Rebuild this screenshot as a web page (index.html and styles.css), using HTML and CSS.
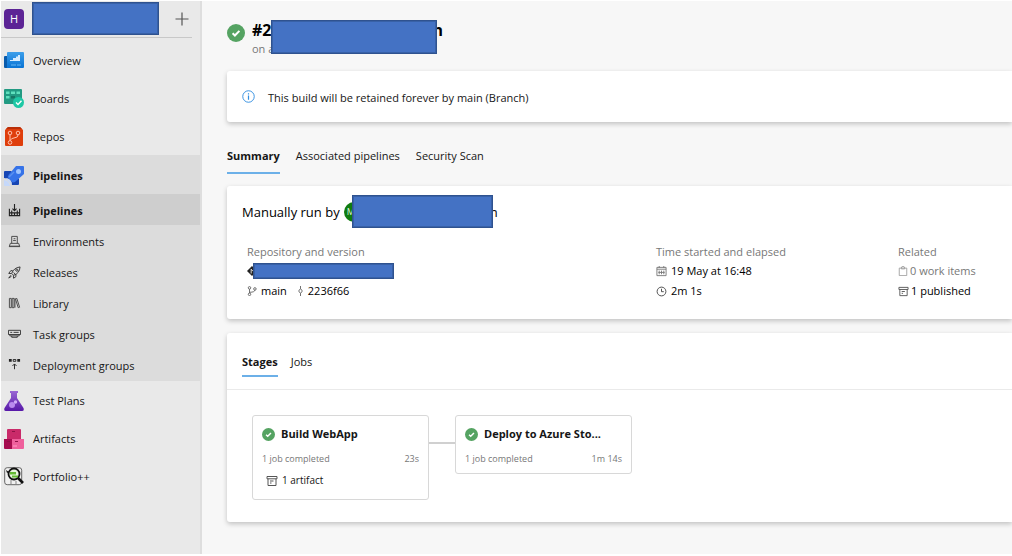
FILE: index.html
```html
<!DOCTYPE html>
<html lang="en">
<head>
<meta charset="utf-8">
<meta name="viewport" content="width=device-width, initial-scale=1">
<title>Pipeline run</title>
<link rel="stylesheet" href="styles.css">
</head>
<body>
<svg class="defs" aria-hidden="true">
  <symbol id="check" viewBox="0 0 18 18"><circle cx="9" cy="9" r="9" fill="#55a362"/><path d="M5.600 9.300l2.300 2.200 4.500-4.600" fill="none" stroke="#fff" stroke-width="2"/></symbol>
  <symbol id="artifact" viewBox="0 0 12 12"><path d="M1 1.500h10v2.300H1zM2 3.800v6.700h8V3.800M4 6h3.500M4 8h1.500" fill="none" stroke="currentColor"/></symbol>
</svg>
<div class="app">
  <aside class="sidebar">
    <div class="project">
      <span class="avatar">H</span>
      <span class="mask mask-project"></span>
      <button class="add" aria-label="Add"><svg viewBox="0 0 14 14" width="14" height="14"><path d="M7 .5v13M.5 7h13" stroke="#555" stroke-width="1.200"/></svg></button>
    </div>
    <nav class="nav">
      <a class="item" href="#"><svg class="icon" viewBox="0 0 20 20"><defs><linearGradient id="ov" x2="0" y2="1"><stop stop-color="#3c9eea"/><stop offset="1" stop-color="#0873d4"/></linearGradient></defs><path d="M0 6q0-1 1-1h4v12H1q-1 0-1-1z" fill="#0a5bab"/><path d="M3 2q0-1 1-1h15q1 0 1 1v14q0 1-1 1H3z" fill="url(#ov)"/><path d="M6 9h3V7h3V5.500h2V4h2v6H6z" fill="#d6ecff"/><path d="M7 14h5M13 14h4" stroke="#64b5f3" stroke-width="1.200"/></svg><span>Overview</span></a>
      <a class="item" href="#"><svg class="icon" viewBox="0 0 20 20"><path d="M0 1q0-1 1-1h16q1 0 1 1v14H1q-1 0-1-1z" fill="#229a82"/><path d="M2 2.500h3.500v2.500H2zM7 2.500h4v2.500H7zM12.500 2.500H16v2.500h-3.500zM2 7h3.500v2.500H2z" fill="#5fe0bd"/><path d="M7 7h4v2.500H7z" fill="#167563"/><circle cx="14.500" cy="13.500" r="5.500" fill="#1ec8a5"/><path d="M12 13.500l2 2 3.500-3.700" fill="none" stroke="#fff" stroke-width="1.400"/></svg><span>Boards</span></a>
      <a class="item" href="#"><svg class="icon" viewBox="0 0 20 20"><path d="M4 0h12l3 3v15q0 1-1 1H2q-1 0-1-1V3z" fill="#df3e0c"/><path d="M4 0h12l2 2H2z" fill="#b92f08"/><g fill="none" stroke="#ffc3ae"><circle cx="6" cy="6" r="1.800"/><circle cx="14" cy="6" r="1.800"/><circle cx="6" cy="15.500" r="1.800"/><path d="M6 8v5.700M14 8q0 2.500-3 2.700-4 .3-5 3"/></g></svg><span>Repos</span></a>
      <div class="group">
        <a class="item active" href="#"><svg class="icon" viewBox="0 0 20 20"><path d="M1 5h6l8 8v5q0 1-1 1H8l-1-5-1-1-6-1V6q0-1 1-1z" fill="#1746b4"/><path d="M12 0h7q1 0 1 1v7l-9 8q-2 1-3.500-.5l-3-3Q3 11 4.500 9z" fill="#3673e8"/><path d="M5 11l5-5" stroke="#5b91f0" stroke-width="1.500"/><circle cx="14.500" cy="5.500" r="2.500" fill="#9dc3ff"/><path d="M0 14l3 1 2 2 1 3H1q-1 0-1-1zM3 12l5 5-1 1-5-5z" fill="#c5d8fa"/></svg><span>Pipelines</span></a>
        <a class="item sub current" href="#"><svg class="subicon" viewBox="0 0 14 14"><path d="M7 0v7M4.800 5L7 7.200 9.200 5M1.500 5v7.500h11V5M4 7v5M7 9v3.500M10 7v5M1.500 9.500h11" fill="none" stroke="#222" stroke-width="1.200"/></svg><span>Pipelines</span></a>
        <a class="item sub" href="#"><svg class="subicon" viewBox="0 0 14 14"><path d="M4 9V1.500h6V9M6 4h2M5.500 6h3M2.500 9h9l1 3h-11zM1 12.500h12" fill="none" stroke="#444"/></svg><span>Environments</span></a>
        <a class="item sub" href="#"><svg class="subicon" viewBox="0 0 14 14"><path d="M4 8Q6 2 13 1q-.5 7-7 9zM5 5H3L.8 8l3 .2M8.500 9v2.500L6 13.200 5.800 10M3 10l-2.200 3 3-2M6 7l2 2" fill="none" stroke="#333"/><circle cx="9.500" cy="4.500" r="1.200" fill="none" stroke="#333"/></svg><span>Releases</span></a>
        <a class="item sub" href="#"><svg class="subicon" viewBox="0 0 14 14"><path d="M1.500 1.500h2v10h-2zM4.500 1.500h2v10h-2zM8 2l1.500-.5 3 9.500-1.500.5zM7.500 1.500v10" fill="none" stroke="#444"/></svg><span>Library</span></a>
        <a class="item sub" href="#"><svg class="subicon" viewBox="0 0 14 14"><path d="M.5 2.500h13v4.500H.5zM2.500 4.700h2M6 4.700h5.500M2 7v1.500h10V7M4 8.500V10h6V8.500" fill="none" stroke="#333"/></svg><span>Task groups</span></a>
        <a class="item sub" href="#"><svg class="subicon" viewBox="0 0 14 14"><path d="M1 0h3v3H1zM10 0h3v3h-3z" fill="#222"/><path d="M5.600 .5h2.800v2H5.600zM7 11V5.500M4.800 7.500L7 5.300l2.200 2.200" fill="none" stroke="#222"/></svg><span>Deployment groups</span></a>
      </div>
      <a class="item" href="#"><svg class="icon" viewBox="0 0 20 20"><defs><linearGradient id="tp" x2="0" y2="1"><stop stop-color="#9a68d4"/><stop offset="1" stop-color="#5718a8"/></linearGradient></defs><path d="M6 0h8v2h-1v5l6.500 10q1 3-1.500 3H2q-2.500 0-1.500-3L7 7V2H6z" fill="url(#tp)"/><circle cx="8" cy="14" r="3" fill="#b98aee"/><circle cx="11.500" cy="11" r="1.700" fill="#d0aef8"/></svg><span>Test Plans</span></a>
      <a class="item" href="#"><svg class="icon" viewBox="0 0 20 20"><path d="M4 0h12q1 0 1 1v9H3V1q0-1 1-1z" fill="#c92a69"/><path d="M0 10h8v10H1q-1 0-1-1z" fill="#a60d4f"/><path d="M8 10h12v9q0 1-1 1H8z" fill="#ef609c"/><path d="M8 2.500h3M3 12.500h3M11 12.500h3" stroke="#8d1246" stroke-width="1.200"/><path d="M9 17h4" stroke="#ff9dc4"/></svg><span>Artifacts</span></a>
      <a class="item" href="#"><svg class="icon" viewBox="0 0 20 20"><rect x=".7" y=".7" width="17" height="17" rx="2.500" fill="#f1f1f1" stroke="#666"/><path d="M7 13v4M12 14v3" stroke="#bbb" stroke-width="2"/><circle cx="10" cy="7" r="5.500" fill="#e8f6df" stroke="#111" stroke-width="1.800"/><path d="M6 5h6v2.500H6zM8 8.500h6v2H8z" fill="#63b933"/><path d="M14 11l5 5" stroke="#111" stroke-width="2.600"/><path d="M2 3l3 2-2 1z" fill="#111"/></svg><span>Portfolio++</span></a>
    </nav>
  </aside>
  <main class="main">
    <header class="header">
      <svg class="status" role="img" aria-label="Succeeded"><use href="#check"/></svg>
      <div class="heading">
        <h1 class="title"><span>#2</span><span>n</span></h1>
        <p class="subtitle">on a</p>
        <span class="mask mask-title"></span>
      </div>
    </header>
    <section class="card notice">
      <svg viewBox="0 0 14 14" width="13" height="13"><circle cx="7" cy="7" r="6.200" fill="none" stroke="#2f8de0"/><path d="M7 6v4.500M7 3.500v1.300" stroke="#2f8de0" stroke-width="1.300"/></svg>
      <p>This build will be retained forever by main (Branch)</p>
    </section>
    <nav class="tabs">
      <a class="tab selected" href="#">Summary</a>
      <a class="tab" href="#">Associated pipelines</a>
      <a class="tab" href="#">Security Scan</a>
    </nav>
    <section class="card summary">
      <div class="runby"><span>Manually run by</span><span class="user"><span class="userpic">M</span><span>n</span><span class="mask mask-user"></span></span></div>
      <div class="details">
        <div class="detail">
          <p class="label">Repository and version</p>
          <p class="line repo"><svg viewBox="0 0 12 12" width="10" height="10"><path d="M6 0l6 6-6 6-6-6z" fill="#222"/><path d="M4.500 3.500l3 3M5 4v5" stroke="#fff"/></svg><span class="mask mask-repo"></span></p>
          <p class="line"><svg viewBox="0 0 12 12" width="10" height="10"><g fill="none" stroke="#555"><circle cx="3" cy="2.200" r="1.500"/><circle cx="3" cy="10" r="1.500"/><circle cx="9.500" cy="3.500" r="1.500"/><path d="M3 3.700v4.800M9.500 5Q9 7.500 3.500 7.500"/></g></svg><span>main</span><svg class="commit" viewBox="0 0 8 12" width="7" height="10"><path d="M4 0v3M4 9v3M4 3l2.200 3L4 9 1.800 6z" fill="none" stroke="#555"/></svg><span>2236f66</span></p>
        </div>
        <div class="detail">
          <p class="label">Time started and elapsed</p>
          <p class="line"><svg viewBox="0 0 12 12" width="11" height="11"><path d="M1 1.500h10v9H1zM1 3.500h10M3.500 0v2M8.500 0v2M3.500 5v4M6 5v4M8.500 5v4M2.500 7h7" fill="none" stroke="#777"/></svg><span>19 May at 16:48</span></p>
          <p class="line"><svg viewBox="0 0 12 12" width="11" height="11"><circle cx="6" cy="6" r="4.800" fill="none" stroke="#444"/><path d="M6 3v3.200h2.500" fill="none" stroke="#444"/></svg><span>2m 1s</span></p>
        </div>
        <div class="detail">
          <p class="label">Related</p>
          <p class="line muted tight"><svg viewBox="0 0 12 12" width="10" height="10"><path d="M1.500 2.500h9v9h-9zM4 2.500q0-2 2-2t2 2v1H4z" fill="none" stroke="#999"/></svg><span>0 work items</span></p>
          <p class="line tight"><svg class="box" width="11" height="11"><use href="#artifact"/></svg><span>1 published</span></p>
        </div>
      </div>
    </section>
    <section class="card stages">
      <nav class="tabs inner">
        <a class="tab selected" href="#">Stages</a>
        <a class="tab" href="#">Jobs</a>
      </nav>
      <div class="flow">
        <article class="stage">
          <h2 class="stage-title"><svg class="dot"><use href="#check"/></svg><span>Build WebApp</span></h2>
          <p class="meta"><span>1 job completed</span><span>23s</span></p>
          <p class="artifact"><svg class="box" width="12" height="12"><use href="#artifact"/></svg><span>1 artifact</span></p>
        </article>
        <span class="connector"></span>
        <article class="stage">
          <h2 class="stage-title"><svg class="dot"><use href="#check"/></svg><span>Deploy to Azure Sto...</span></h2>
          <p class="meta"><span>1 job completed</span><span>1m 14s</span></p>
        </article>
      </div>
    </section>
  </main>
</div>
</body>
</html>
```
FILE: styles.css
```css
* { box-sizing: border-box; }
body {
  margin: 0;
  background: #fff;
  color: #161616;
  font: 11px/16px "Open Sans", "Noto Sans", sans-serif;
}
p, h1, h2 { margin: 0; }
a { color: inherit; text-decoration: none; }
svg { flex: none; }
.defs { position: absolute; width: 0; height: 0; }
.app {
  display: flex;
  min-height: 100vh;
  border: solid #fff;
  border-width: 1px 0 2px 1px;
}
.mask { background: #4472c4; border: 1px solid #2f528f; outline: 1px solid #2f528f88; outline-offset: -2px; }

.sidebar { flex: none; width: 201px; background: #e9e9e9; border-right: 2px solid #dedede; }
.project {
  display: flex;
  align-items: center;
  height: 37px;
  margin-right: 8px;
  padding-left: 3px;
  border-bottom: 1px solid #c8c8c8;
}
.avatar {
  width: 20px;
  height: 20px;
  border-radius: 4px;
  background: #5c2495;
  color: #fff;
  text-align: center;
  line-height: 20px;
}
.mask-project { width: 127px; height: 33px; margin: 0 0 2px 8px; }
.add { margin: 0 3px 0 auto; padding: 0; border: 0; background: none; line-height: 0; }
.add svg { display: block; }
.nav { padding-top: 3px; }
.item { display: flex; align-items: center; gap: 9px; height: 38px; padding: 2px 0 0 3px; }
.group { padding-bottom: 1px; background: #dcdcdc; }
.active, .current { font-weight: 700; }
.active { height: 39px; }
.sub { height: 31px; gap: 12px; padding-left: 7px; }
.current { background: #cecece; }
.icon { width: 20px; height: 20px; }
.subicon { width: 13px; height: 13px; }

.main { flex: 1; min-width: 0; padding: 19px 0 30px 25px; background: #f7f7f7; }
.header { display: flex; gap: 7px; margin-bottom: 14px; }
.status { width: 18px; height: 18px; margin-top: 4px; }
.heading { position: relative; }
.title { display: flex; justify-content: space-between; width: 191px; font-size: 16px; line-height: 20px; color: #000; }
.subtitle { color: #777; line-height: 17px; }
.mask-title { position: absolute; left: 19px; top: 0; width: 166px; height: 34px; }
.card { border-radius: 3px 0 0 3px; background: #fff; box-shadow: 0 2px 5px #00000038; }
.notice { display: flex; align-items: flex-start; gap: 13px; padding: 19px 15px 16px; }
.tabs { display: flex; gap: 16px; padding-top: 26px; margin-bottom: 12px; }
.tab { padding-bottom: 8px; border-bottom: 2px solid transparent; }
.selected { border-color: #6cb0e8; font-weight: 700; }
.summary { margin-bottom: 14px; padding: 16px 0 18px 15px; }
.runby { display: flex; gap: 4px; font-size: 13px; line-height: 20px; color: #000; }
.user { position: relative; display: flex; justify-content: space-between; width: 154px; }
.userpic { width: 20px; height: 20px; padding-left: 3px; border-radius: 50%; background: #107c10; color: #d8efd8; font-size: 9px; }
.mask-user { position: absolute; left: 8px; top: -7px; width: 141px; height: 33px; }
.details { display: grid; grid-template-columns: 409fr 242fr 114fr; padding: 22px 0 0 5px; white-space: nowrap; }
.label { padding-bottom: 1px; color: #777; }
.line { display: flex; align-items: center; gap: 4px; height: 20px; color: #000; }
.tight { gap: 2px; }
.muted { color: #777; }
.box { color: #555; }
.commit { margin-left: 6px; }
.repo { position: relative; }
.mask-repo { position: absolute; left: 6px; top: 2px; width: 141px; height: 16px; }
.inner { margin: 0; padding: 21px 0 12px 15px; gap: 13px; border-bottom: 1px solid #eaeaea; }
.inner .tab { padding-bottom: 5px; }
.flow { display: flex; align-items: flex-start; padding: 25px; padding-bottom: 22px; }
.stage { width: 177px; padding: 10px 9px 7px; border: 1px solid #d8d8d8; border-radius: 3px; }
.stage-title { display: flex; align-items: center; gap: 6px; font-size: 11px; line-height: 16px; white-space: nowrap; }
.dot { width: 13px; height: 13px; }
.meta { display: flex; justify-content: space-between; padding-top: 9px; color: #777; font-size: 9px; line-height: 15px; }
.artifact { display: flex; align-items: center; gap: 4px; padding: 7px 0 4px 4px; font-size: 10px; line-height: 15px; }
.connector { width: 26px; height: 2px; margin-top: 27px; background: #d0d0d0; }
```
